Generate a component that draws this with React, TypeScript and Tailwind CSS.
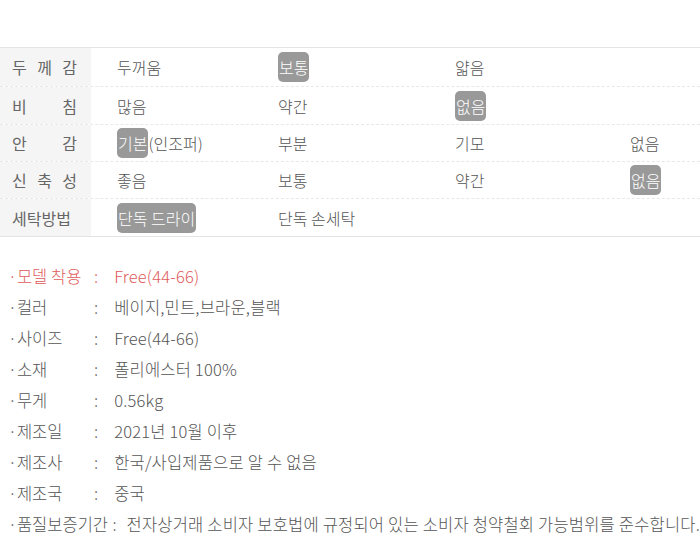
import React from 'react';

type Cell = { text: string; on?: boolean; extra?: string };

const rows: { label: string[]; h: string; cells: (Cell | null)[] }[] = [
  { label: ['두', '께', '감'], h: 'h-[38px]', cells: [{ text: '두꺼움' }, { text: '보통', on: true }, { text: '얇음' }, null] },
  { label: ['비', '침'], h: 'h-[38px]', cells: [{ text: '많음' }, { text: '약간' }, { text: '없음', on: true }, null] },
  { label: ['안', '감'], h: 'h-[37px]', cells: [{ text: '기본', on: true, extra: '(인조퍼)' }, { text: '부분' }, { text: '기모' }, { text: '없음' }] },
  { label: ['신', '축', '성'], h: 'h-[37px]', cells: [{ text: '좋음' }, { text: '보통' }, { text: '약간' }, { text: '없음', on: true }] },
  { label: ['세탁방법'], h: 'h-[38px]', cells: [{ text: '단독 드라이', on: true }, { text: '단독 손세탁' }, null, null] },
];

const specs: { label: string; value: string; red?: boolean }[] = [
  { label: '·모델 착용', value: 'Free(44-66)', red: true },
  { label: '·컬러', value: '베이지,민트,브라운,블랙' },
  { label: '·사이즈', value: 'Free(44-66)' },
  { label: '·소재', value: '폴리에스터 100%' },
  { label: '·무게', value: '0.56kg' },
  { label: '·제조일', value: '2021년 10월 이후' },
  { label: '·제조사', value: '한국/사입제품으로 알 수 없음' },
  { label: '·제조국', value: '중국' },
  { label: '·품질보증기간', value: '전자상거래 소비자 보호법에 규정되어 있는 소비자 청약철회 가능범위를 준수합니다.' },
];

const colWidths = ['w-[161px]', 'w-[177px]', 'w-[175px]', 'flex-1'];

export default function App() {
  return (
    <div
      className="w-[700px] h-[554px] bg-white text-[#555] overflow-hidden font-light"
      style={{ fontFamily: '"Noto Sans CJK KR", "Noto Sans", sans-serif' }}
    >
      <div className="pt-[47px]">
        <div className="border-t border-b border-[#e4e4e4]">
          {rows.map((r, i) => (
            <div
              key={i}
              className={`flex ${r.h} items-center ${i > 0 ? 'border-t border-dashed border-[#e8e8e8]' : ''}`}
            >
              <div className="w-[91px] h-full bg-[#f5f5f5] flex items-center pl-[12px]">
                <div className={`w-[65px] flex text-[16px] font-normal text-[#666] ${r.label.length > 1 ? 'justify-between' : ''}`}>
                  {r.label.map((c, k) => (
                    <span key={k}>{c}</span>
                  ))}
                </div>
              </div>
              <div className="flex flex-1 pl-[26px] text-[16px]">
                {r.cells.map((c, k) => (
                  <div key={k} className={colWidths[k]}>
                    {c && (
                      <span>
                        <span className={c.on ? 'bg-[#999] text-white rounded-[5px] px-[1px] py-[3px]' : ''}>{c.text}</span>
                        {c.extra}
                      </span>
                    )}
                  </div>
                ))}
              </div>
            </div>
          ))}
        </div>
      </div>

      <div className="pt-[24px] pl-[8px] text-[16.5px]">
        {specs.map((s, i) => {
          const long = s.label.length > 6;
          return (
            <div key={i} className={`flex h-[31px] items-center whitespace-nowrap ${s.red ? 'text-[#e05a5a]' : ''}`}>
              <span className="min-w-[76px]">{s.label}</span>
              <span className={long ? 'ml-[14px] mr-[10px]' : 'ml-[10px] mr-[16px]'}>:</span>
              <span className="tracking-[0.2px]">{s.value}</span>
            </div>
          );
        })}
      </div>
    </div>
  );
}
